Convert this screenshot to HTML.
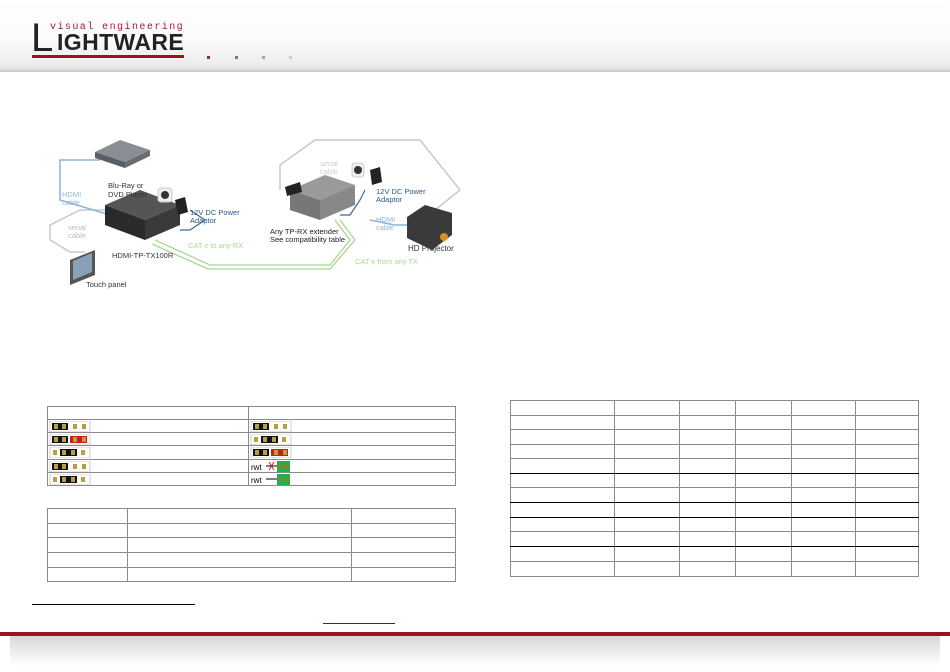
<!DOCTYPE html>
<html><head><meta charset="utf-8"><style>
*{margin:0;padding:0;box-sizing:border-box}
body{width:950px;height:672px;position:relative;background:#fff;font-family:"Liberation Sans",sans-serif;overflow:hidden}
.hdr{position:absolute;left:0;top:0;width:950px;height:72px;background:linear-gradient(180deg,#fff 0%,#fbfbfb 55%,#ececec 90%,#d8d8d8 100%)}
.hdr:after{content:"";position:absolute;left:0;right:0;bottom:0;height:2px;background:#cfcfcf}
.ab{position:absolute}
table{position:absolute;border-collapse:collapse;table-layout:fixed}
td{border:1px solid #8a8a8a;padding:0 0 0 1px;line-height:0;vertical-align:middle}
td svg{display:block}
tr.k td{border-bottom:1.5px solid #000}
.foot{position:absolute;left:0;top:632px;width:950px;height:4px;background:#9c1420}
.sh{position:absolute;left:10px;top:636px;width:930px;height:30px;background:linear-gradient(180deg,#d8d8d8,#fff)}
</style></head><body>
<div class="hdr">
<div class="ab" style="left:50px;top:22px;font-size:10px;color:#9c2030;letter-spacing:1.45px;font-family:'Liberation Mono',monospace">visual engineering</div>
<div class="ab" style="left:31px;top:18px;font-size:40px;color:#222;line-height:40px">L</div>
<div class="ab" style="left:57px;top:31px;font-size:23px;color:#222;font-weight:bold;line-height:23px;letter-spacing:0.4px">IGHTWARE</div>
<div class="ab" style="left:32px;top:55px;width:152px;height:3px;background:#9c1420"></div>
<div class="ab" style="left:207px;top:56px;width:3px;height:3px;background:#8a2a35"></div>
<div class="ab" style="left:235px;top:56px;width:3px;height:3px;background:#a56a70"></div>
<div class="ab" style="left:262px;top:56px;width:3px;height:3px;background:#c09aa0"></div>
<div class="ab" style="left:289px;top:56px;width:3px;height:3px;background:#d8c8ca"></div>
</div>

<svg class="ab" style="left:40px;top:130px" width="420" height="170" viewBox="0 0 420 170" font-family="Liberation Sans" font-size="7.5">
<g fill="none" stroke="#c8c8c8" stroke-width="1.5">
<path d="M10 110 L10 95 L40 80 L70 80"/><path d="M10 110 L30 122 L45 122"/>
<path d="M240 60 L240 35 L275 10 L380 10 L420 60 L395 80"/>
</g>
<g fill="none" stroke="#8ab4dc" stroke-width="1.5"><path d="M60 30 L20 30 L20 70 L70 85"/><path d="M330 90 L355 95 L375 95"/></g>
<g fill="none" stroke="#a8d890" stroke-width="1.3"><path d="M115 110 L170 135 L215 135 L290 135 L310 110 L295 90"/><path d="M112 114 L168 139 L290 139 L315 110 L300 90"/></g>
<g fill="none" stroke="#3a6a9a" stroke-width="1.2"><path d="M140 100 L150 100 L165 90 L150 80"/><path d="M300 85 L310 85 L320 70 L325 60"/></g>
<path d="M55 22 L80 10 L110 20 L85 32 Z" fill="#8a8d94"/><path d="M55 22 L85 32 L85 38 L55 28Z" fill="#5a5d64"/><path d="M85 32 L110 20 L110 26 L85 38Z" fill="#6a6d74"/>
<path d="M65 75 L100 60 L140 75 L105 90Z" fill="#555"/><path d="M65 75 L105 90 L105 110 L65 95Z" fill="#2a2a2a"/><path d="M105 90 L140 75 L140 95 L105 110Z" fill="#3a3a3a"/>
<rect x="118" y="58" width="14" height="14" rx="3" fill="#eee" stroke="#ccc"/><circle cx="125" cy="65" r="4" fill="#333"/>
<path d="M135 70 L145 67 L148 82 L138 85Z" fill="#222"/>
<path d="M250 60 L285 45 L315 55 L280 70Z" fill="#9a9a9a"/><path d="M250 60 L280 70 L280 90 L250 80Z" fill="#777"/><path d="M280 70 L315 55 L315 75 L280 90Z" fill="#888"/>
<path d="M245 57 L260 52 L262 62 L247 66Z" fill="#222"/>
<rect x="312" y="33" width="12" height="14" rx="3" fill="#eee" stroke="#ccc"/><circle cx="318" cy="40" r="4" fill="#333"/>
<path d="M330 40 L340 37 L342 52 L332 55Z" fill="#222"/>
<path d="M367 87 L385 75 L412 83 L412 105 L392 120 L367 108Z" fill="#3a3a3a"/><circle cx="404" cy="107" r="4" fill="#d89020"/>
<path d="M30 130 L55 120 L55 145 L30 155Z" fill="#555"/><path d="M33 131 L52 123 L52 142 L33 150Z" fill="#8aa0b8"/>
<text x="68" y="58" fill="#333">Blu-Ray or</text><text x="68" y="67" fill="#333">DVD Player</text>
<text x="22" y="67" fill="#8ab4dc">HDMI</text><text x="22" y="75" fill="#8ab4dc">cable</text>
<text x="28" y="100" fill="#bbb">serial</text><text x="28" y="108" fill="#bbb">cable</text>
<text x="150" y="85" fill="#2a5a8a">12V DC Power</text><text x="150" y="93" fill="#2a5a8a">Adaptor</text>
<text x="72" y="128" fill="#333">HDMI-TP-TX100R</text>
<text x="148" y="118" fill="#a8d890">CAT x to any RX</text>
<text x="315" y="134" fill="#a8d890">CAT x from any TX</text>
<text x="46" y="157" fill="#333">Touch panel</text>
<text x="230" y="104" fill="#222">Any TP-RX extender</text><text x="230" y="112" fill="#222">See compatibility table</text>
<text x="336" y="64" fill="#2a5a8a">12V DC Power</text><text x="336" y="72" fill="#2a5a8a">Adaptor</text>
<text x="336" y="92" fill="#8ab4dc">HDMI</text><text x="336" y="100" fill="#8ab4dc">cable</text>
<text x="280" y="36" fill="#ccc">serial</text><text x="280" y="44" fill="#ccc">cable</text>
<text x="368" y="121" fill="#333" font-size="8">HD Projector</text>
</svg>

<table style="left:47px;top:406px;width:409px">
<tr style="height:13px"><td style="width:201px"></td><td></td></tr>
<tr style="height:13px"><td><svg width="42" height="11"><rect x="1" y="0" width="40" height="11" fill="#fff" stroke="#ccc"/><rect x="3" y="2" width="16" height="7" fill="#111"/><rect x="5" y="3" width="4" height="5" fill="#b8a040"/><rect x="13" y="3" width="4" height="5" fill="#b8a040"/><rect x="24" y="3" width="4" height="5" fill="#b8a040"/><rect x="33" y="3" width="4" height="5" fill="#b8a040"/></svg></td><td><svg width="42" height="11"><rect x="1" y="0" width="40" height="11" fill="#fff" stroke="#ccc"/><rect x="3" y="2" width="16" height="7" fill="#111"/><rect x="5" y="3" width="4" height="5" fill="#b8a040"/><rect x="13" y="3" width="4" height="5" fill="#b8a040"/><rect x="24" y="3" width="4" height="5" fill="#b8a040"/><rect x="33" y="3" width="4" height="5" fill="#b8a040"/></svg></td></tr>
<tr style="height:13px"><td><svg width="42" height="11"><rect x="1" y="0" width="40" height="11" fill="#fff" stroke="#ccc"/><rect x="3" y="2" width="16" height="7" fill="#111"/><rect x="21" y="2" width="17" height="7" fill="#c82010"/><rect x="5" y="3" width="4" height="5" fill="#b8a040"/><rect x="13" y="3" width="4" height="5" fill="#b8a040"/><rect x="24" y="3" width="4" height="5" fill="#b8a040"/><rect x="33" y="3" width="4" height="5" fill="#b8a040"/></svg></td><td><svg width="42" height="11"><rect x="1" y="0" width="40" height="11" fill="#fff" stroke="#ccc"/><rect x="11" y="2" width="17" height="7" fill="#111"/><rect x="4" y="3" width="4" height="5" fill="#b8a040"/><rect x="13" y="3" width="4" height="5" fill="#b8a040"/><rect x="22" y="3" width="4" height="5" fill="#b8a040"/><rect x="32" y="3" width="4" height="5" fill="#b8a040"/></svg></td></tr>
<tr style="height:14px"><td><svg width="42" height="11"><rect x="1" y="0" width="40" height="11" fill="#fff" stroke="#ccc"/><rect x="11" y="2" width="17" height="7" fill="#111"/><rect x="4" y="3" width="4" height="5" fill="#b8a040"/><rect x="13" y="3" width="4" height="5" fill="#b8a040"/><rect x="22" y="3" width="4" height="5" fill="#b8a040"/><rect x="32" y="3" width="4" height="5" fill="#b8a040"/></svg></td><td><svg width="42" height="11"><rect x="1" y="0" width="40" height="11" fill="#fff" stroke="#ccc"/><rect x="3" y="2" width="16" height="7" fill="#111"/><rect x="21" y="2" width="17" height="7" fill="#c82010"/><rect x="5" y="3" width="4" height="5" fill="#b8a040"/><rect x="13" y="3" width="4" height="5" fill="#b8a040"/><rect x="24" y="3" width="4" height="5" fill="#b8a040"/><rect x="33" y="3" width="4" height="5" fill="#b8a040"/></svg></td></tr>
<tr style="height:13px"><td><svg width="42" height="11"><rect x="1" y="0" width="40" height="11" fill="#fff" stroke="#ccc"/><rect x="3" y="2" width="16" height="7" fill="#111"/><rect x="5" y="3" width="4" height="5" fill="#b8a040"/><rect x="13" y="3" width="4" height="5" fill="#b8a040"/><rect x="24" y="3" width="4" height="5" fill="#b8a040"/><rect x="33" y="3" width="4" height="5" fill="#b8a040"/></svg></td><td><svg width="42" height="11"><text x="1" y="9" font-size="8" font-family="Liberation Sans">rwt</text><path d="M16 5 H27" stroke="#000"/><path d="M19 1 L24 9 M24 1 L19 9" stroke="#d02020"/><rect x="27" y="0" width="13" height="11" fill="#20b050"/><rect x="29" y="3" width="4" height="5" fill="#7a8a30"/><rect x="35" y="3" width="4" height="5" fill="#7a8a30"/></svg></td></tr>
<tr style="height:13px"><td><svg width="42" height="11"><rect x="1" y="0" width="40" height="11" fill="#fff" stroke="#ccc"/><rect x="11" y="2" width="17" height="7" fill="#111"/><rect x="4" y="3" width="4" height="5" fill="#b8a040"/><rect x="13" y="3" width="4" height="5" fill="#b8a040"/><rect x="22" y="3" width="4" height="5" fill="#b8a040"/><rect x="32" y="3" width="4" height="5" fill="#b8a040"/></svg></td><td><svg width="42" height="11"><text x="1" y="9" font-size="8" font-family="Liberation Sans">rwt</text><path d="M16 5 H27" stroke="#000"/><rect x="27" y="0" width="13" height="11" fill="#20b050"/><rect x="29" y="3" width="4" height="5" fill="#7a8a30"/><rect x="35" y="3" width="4" height="5" fill="#7a8a30"/></svg></td></tr>
</table>

<table style="left:47px;top:508px;width:409px">
<tr style="height:15px"><td style="width:80px"></td><td style="width:224px"></td><td></td></tr>
<tr style="height:14px"><td></td><td></td><td></td></tr>
<tr style="height:15px"><td></td><td></td><td></td></tr>
<tr style="height:15px"><td></td><td></td><td></td></tr>
<tr style="height:14px"><td></td><td></td><td></td></tr>
</table>

<table style="left:510px;top:400px;width:409px">
<tr style="height:15px"><td style="width:104px"></td><td style="width:65px"></td><td style="width:56px"></td><td style="width:56px"></td><td style="width:64px"></td><td></td></tr>
<tr style="height:14px"><td></td><td></td><td></td><td></td><td></td><td></td></tr>
<tr style="height:15px"><td></td><td></td><td></td><td></td><td></td><td></td></tr>
<tr style="height:14px"><td></td><td></td><td></td><td></td><td></td><td></td></tr>
<tr class="k" style="height:15px"><td></td><td></td><td></td><td></td><td></td><td></td></tr>
<tr style="height:14px"><td></td><td></td><td></td><td></td><td></td><td></td></tr>
<tr class="k" style="height:15px"><td></td><td></td><td></td><td></td><td></td><td></td></tr>
<tr class="k" style="height:15px"><td></td><td></td><td></td><td></td><td></td><td></td></tr>
<tr style="height:14px"><td></td><td></td><td></td><td></td><td></td><td></td></tr>
<tr class="k" style="height:15px"><td></td><td></td><td></td><td></td><td></td><td></td></tr>
<tr style="height:15px"><td></td><td></td><td></td><td></td><td></td><td></td></tr>
<tr style="height:15px"><td></td><td></td><td></td><td></td><td></td><td></td></tr>
</table>

<div class="ab" style="left:32px;top:604px;width:163px;height:1px;background:#000"></div>
<div class="ab" style="left:323px;top:623px;width:72px;height:1px;background:#1a2aa0"></div>
<div class="foot"></div><div class="sh"></div>
</body></html>
